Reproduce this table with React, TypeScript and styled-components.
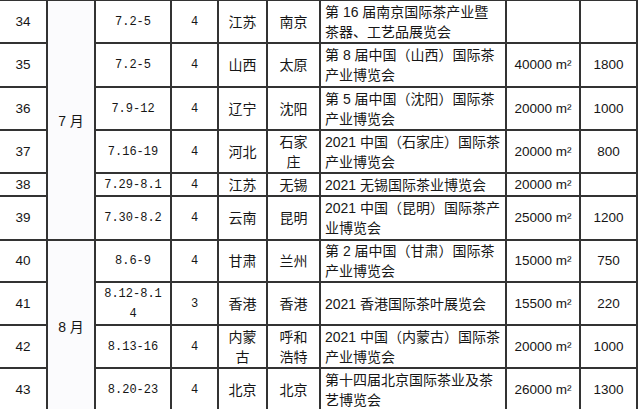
import React from 'react';
import styled, { createGlobalStyle } from 'styled-components';

const GlobalStyle = createGlobalStyle`
  html, body {
    margin: 0;
    padding: 0;
    background: #ffffff;
    overflow: hidden;
  }
`;

const Page = styled.div`
  width: 640px;
  height: 409px;
  overflow: hidden;
  background: #ffffff;
`;

const Grid = styled.div`
  display: grid;
  grid-template-columns: 46px 46px 74px 45px 47px 51px 184px 72px 55px;
  grid-template-rows: 41px 42px 41px 41px 21px 42px 40px 41px 41px 41px;
  gap: 2px;
  padding: 2px 2px 2px 0;
  margin-top: -1px;
  width: fit-content;
  background: #333333;
`;

const Cell = styled.div<{ $align?: 'left' | 'center'; $font?: 'mono' | 'sans' }>`
  display: flex;
  flex-direction: column;
  justify-content: center;
  align-items: ${(p) => (p.$align === 'left' ? 'flex-start' : 'center')};
  padding: ${(p) => (p.$align === 'left' ? '0 0 0 4px' : '0')};
  background: #ffffff;
  color: #161616;
  font-family: ${(p) =>
    p.$font === 'mono'
      ? '"Liberation Mono", "Noto Sans CJK SC", monospace'
      : '"Liberation Sans", "Noto Sans CJK SC", sans-serif'};
  font-size: ${(p) => (p.$font === 'mono' ? '12px' : '13.5px')};
  line-height: 20px;
  overflow: hidden;
`;

const TextCell = styled(Cell)`
  font-size: 14px;
`;

const MonthCell = styled.div<{ $start: number; $span: number }>`
  grid-column: 2;
  grid-row: ${(p) => p.$start} / span ${(p) => p.$span};
  display: flex;
  align-items: center;
  justify-content: center;
  background: #fbfbfd;
  color: #161616;
  font-family: "Liberation Sans", "Noto Sans CJK SC", sans-serif;
  font-size: 14px;
  white-space: pre;
`;

const Line = styled.span`
  display: block;
  white-space: pre;
`;

type Row = {
  no: number;
  date: string[];
  days: string;
  province: string[];
  city: string[];
  event: string[];
  area: string;
  count: string;
};

const rows: Row[] = [
  { no: 34, date: ['7.2-5'], days: '4', province: ['江苏'], city: ['南京'], event: ['第 16 届南京国际茶产业暨', '茶器、工艺品展览会'], area: '', count: '' },
  { no: 35, date: ['7.2-5'], days: '4', province: ['山西'], city: ['太原'], event: ['第 8 届中国（山西）国际茶', '产业博览会'], area: '40000', count: '1800' },
  { no: 36, date: ['7.9-12'], days: '4', province: ['辽宁'], city: ['沈阳'], event: ['第 5 届中国（沈阳）国际茶', '产业博览会'], area: '20000', count: '1000' },
  { no: 37, date: ['7.16-19'], days: '4', province: ['河北'], city: ['石家', '庄'], event: ['2021 中国（石家庄）国际茶', '产业博览会'], area: '20000', count: '800' },
  { no: 38, date: ['7.29-8.1'], days: '4', province: ['江苏'], city: ['无锡'], event: ['2021 无锡国际茶业博览会'], area: '20000', count: '' },
  { no: 39, date: ['7.30-8.2'], days: '4', province: ['云南'], city: ['昆明'], event: ['2021 中国（昆明）国际茶产', '业博览会'], area: '25000', count: '1200' },
  { no: 40, date: ['8.6-9'], days: '4', province: ['甘肃'], city: ['兰州'], event: ['第 2 届中国（甘肃）国际茶', '产业博览会'], area: '15000', count: '750' },
  { no: 41, date: ['8.12-8.1', '4'], days: '3', province: ['香港'], city: ['香港'], event: ['2021 香港国际茶叶展览会'], area: '15500', count: '220' },
  { no: 42, date: ['8.13-16'], days: '4', province: ['内蒙', '古'], city: ['呼和', '浩特'], event: ['2021 中国（内蒙古）国际茶', '产业博览会'], area: '20000', count: '1000' },
  { no: 43, date: ['8.20-23'], days: '4', province: ['北京'], city: ['北京'], event: ['第十四届北京国际茶业及茶', '艺博览会'], area: '26000', count: '1300' },
];

const lines = (items: string[]) => items.map((t, i) => <Line key={i}>{t}</Line>);

export default function App() {
  return (
    <Page>
      <GlobalStyle />
      <Grid>
        <MonthCell $start={1} $span={6}>7 月</MonthCell>
        <MonthCell $start={7} $span={4}>8 月</MonthCell>
        {rows.map((r) => (
          <React.Fragment key={r.no}>
            <Cell>{r.no}</Cell>
            <Cell $font="mono">{lines(r.date)}</Cell>
            <Cell $font="mono">{r.days}</Cell>
            <TextCell>{lines(r.province)}</TextCell>
            <TextCell>{lines(r.city)}</TextCell>
            <TextCell $align="left">{lines(r.event)}</TextCell>
            <Cell>{r.area && `${r.area} m²`}</Cell>
            <Cell>{r.count}</Cell>
          </React.Fragment>
        ))}
      </Grid>
    </Page>
  );
}
